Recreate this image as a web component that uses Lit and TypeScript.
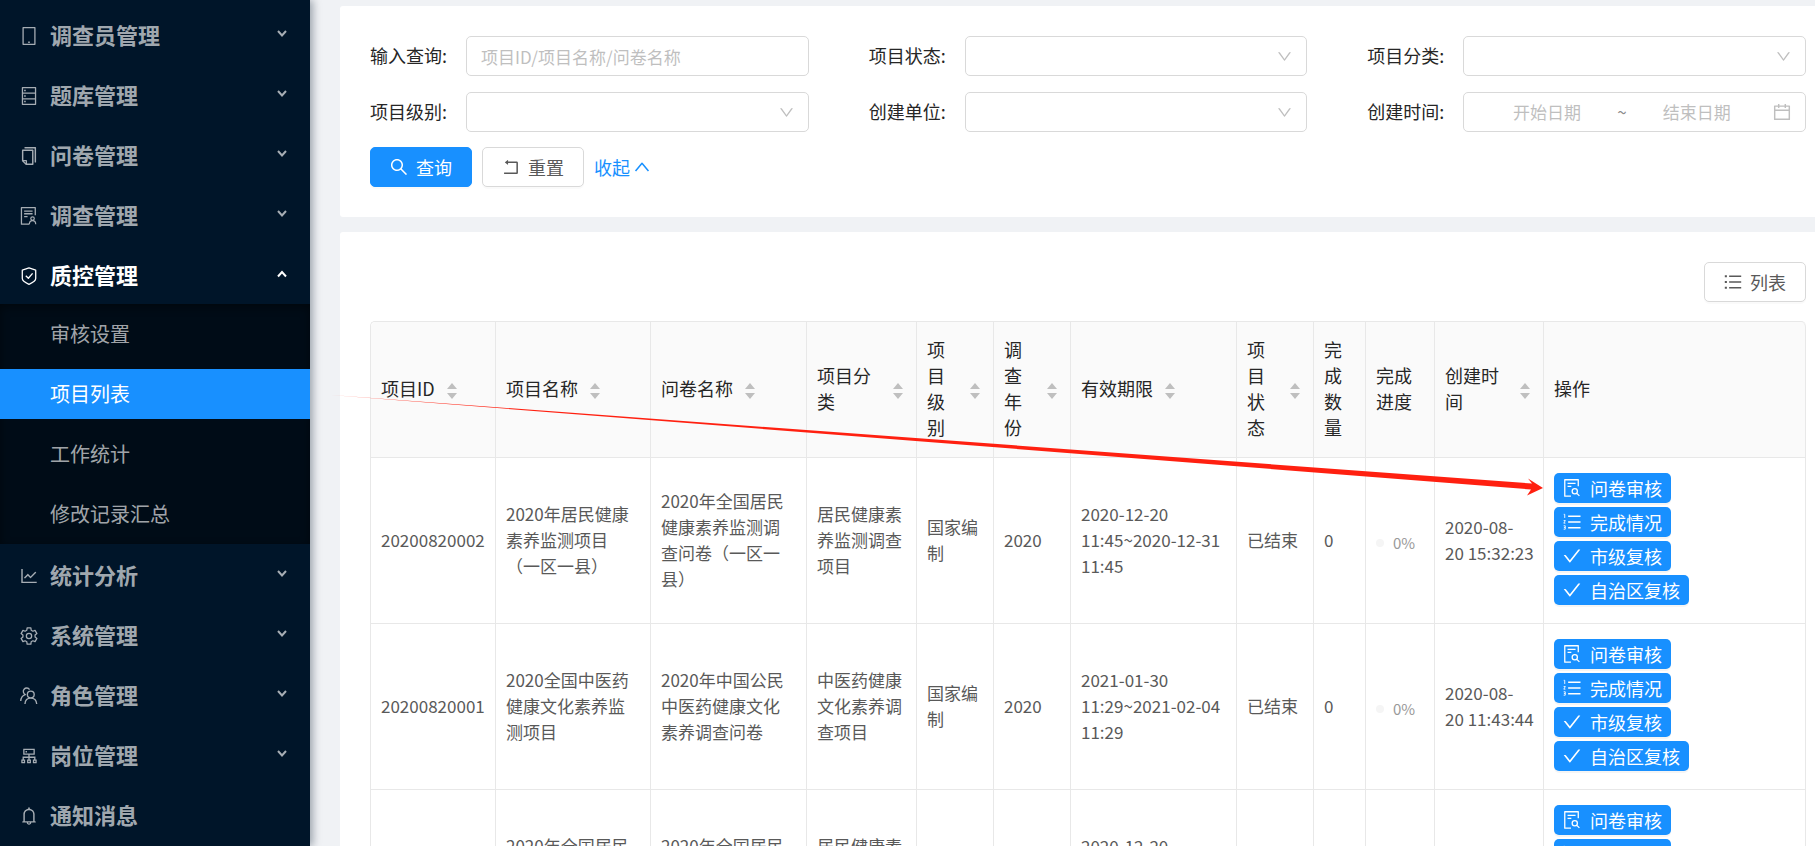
import { LitElement, html, svg, css, nothing, type TemplateResult } from "lit";
import { customElement, state } from "lit/decorators.js";

/* ---------- icons: all drawn on a 1024 grid ---------- */

const gearOutline = (): string => {
  const pts: string[] = [];
  for (let k = 0; k < 6; k++) {
    const base = k * 60 - 90;
    for (const [offset, r] of [[-21, 306], [-13, 412], [13, 412], [21, 306]]) {
      const a = ((base + offset) * Math.PI) / 180;
      pts.push(`${(512 + r * Math.cos(a)).toFixed(1)} ${(512 + r * Math.sin(a)).toFixed(1)}`);
    }
  }
  return `M${pts.join("L")}Z`;
};

const filled = (d: string) => svg`<path fill="currentColor" fill-rule="evenodd" d=${d}></path>`;
const stroked = (d: string, w = 64) =>
  svg`<path fill="none" stroke="currentColor" stroke-width=${w} stroke-linejoin="round" d=${d}></path>`;

const ICONS: Record<string, TemplateResult> = {
  tablet: svg`${stroked("M218 98H806V926H218Z")}${filled("M472 784h80v80h-80z")}`,
  database: svg`${stroked("M186 98H838V926H186ZM186 374H838M186 650H838")}
    ${filled("M270 200h80v72h-80zM270 476h80v72h-80zM270 752h80v72h-80z")}`,
  copy: filled(
    "M832 64H296c-4.4 0-8 3.6-8 8v56c0 4.400 3.600 8 8 8h496v688c0 4.400 3.600 8 8 8h56c4.400 0 8-3.600 8-8V96c0-17.700-14.300-32-32-32zM704 192H192c-17.700 0-32 14.300-32 32v530.700c0 8.500 3.400 16.600 9.400 22.600l173.300 173.300c2.200 2.200 4.700 4 7.400 5.500v1.900h4.200c3.500 1.300 7.200 2 11 2H704c17.700 0 32-14.300 32-32V224c0-17.700-14.300-32-32-32zM350 856.200L263.900 770H350v86.200zM664 888H414V746c0-22.100-17.900-40-40-40H232V264h432v624z"
  ),
  solution: svg`${stroked("M520 920H136V100H824V470M270 270H690M270 400H690M270 540H440")}
    ${stroked("M600 640A88 88 0 1 0 776 640A88 88 0 1 0 600 640ZM530 926C530 800 600 740 688 740S846 800 846 926", 60)}`,
  shield: svg`${stroked("M512 112L846 220V640C846 780 690 850 512 926C334 850 178 780 178 640V220Z")}
    ${stroked("M352 500L480 625L690 380")}`,
  chart: filled(
    "M888 792H200V168c0-4.400-3.600-8-8-8h-56c-4.400 0-8 3.600-8 8v688c0 4.400 3.600 8 8 8h752c4.400 0 8-3.600 8-8v-56c0-4.400-3.600-8-8-8zM305.800 637.700c3.100 3.100 8.100 3.100 11.300 0l138.300-137.600L583 628.500c3.100 3.100 8.200 3.100 11.300 0l275.400-275.300c3.100-3.100 3.100-8.200 0-11.300l-39.600-39.600a8.030 8.030 0 0 0-11.300 0l-230 229.900L461.400 404a8.030 8.030 0 0 0-11.300 0L266.300 586.700a8.030 8.030 0 0 0 0 11.300l39.500 39.700z"
  ),
  setting: svg`${stroked(gearOutline(), 64)}${stroked("M380 512A132 132 0 1 0 644 512A132 132 0 1 0 380 512Z", 64)}`,
  team: svg`${stroked("M430 440A170 170 0 1 0 770 440A170 170 0 1 0 430 440ZM310 910C320 730 440 620 600 620S880 730 896 910", 68)}
    ${stroked("M540 190A170 170 0 1 0 330 440C200 480 110 600 100 760", 68)}`,
  cluster: filled(
    "M888 680h-54V540H546v-92h238c8.800 0 16-7.200 16-16V168c0-8.800-7.200-16-16-16H240c-8.800 0-16 7.200-16 16v264c0 8.800 7.200 16 16 16h238v92H190v140h-54c-4.400 0-8 3.600-8 8v176c0 4.400 3.600 8 8 8h176c4.400 0 8-3.600 8-8V688c0-4.400-3.600-8-8-8h-54v-72h220v72h-54c-4.400 0-8 3.600-8 8v176c0 4.400 3.600 8 8 8h176c4.400 0 8-3.600 8-8V688c0-4.400-3.600-8-8-8h-54v-72h220v72h-54c-4.400 0-8 3.600-8 8v176c0 4.400 3.600 8 8 8h176c4.400 0 8-3.600 8-8V688c0-4.400-3.600-8-8-8zM288 216h448v168H288zM192 744h64v64h-64zM480 744h64v64h-64zM768 744h64v64h-64zM340 264h72v72h-72z"
  ),
  bell: filled(
    "M816 768h-24V428c0-141.100-104.300-257.700-240-277.100V112c0-22.100-17.900-40-40-40s-40 17.900-40 40v38.900c-135.700 19.400-240 136-240 277.100v340h-24c-17.700 0-32 14.300-32 32v32c0 4.400 3.600 8 8 8h216c0 61.800 50.200 112 112 112s112-50.200 112-112h216c4.400 0 8-3.600 8-8v-32c0-17.700-14.300-32-32-32zM512 888c-26.500 0-48-21.500-48-48h96c0 26.500-21.500 48-48 48zM304 768V428c0-55.600 21.600-107.800 60.900-147.100S456.400 220 512 220c55.600 0 107.800 21.600 147.100 60.900S720 372.400 720 428v340H304z"
  ),
  down: filled(
    "M884 256h-75c-5.100 0-9.900 2.500-12.900 6.600L512 654.200 227.900 262.600c-3-4.100-7.800-6.600-12.900-6.600h-75c-6.500 0-10.300 7.400-6.500 12.700l352.600 486.100c12.800 17.600 39 17.600 51.700 0l352.600-486.100c3.900-5.300.1-12.700-6.400-12.700z"
  ),
  up: stroked("M150 740L512 300L874 740", 84),
  search: filled(
    "M909.600 854.500L649.900 594.800C690.200 542.700 712 479 712 412c0-80.200-31.300-155.400-87.900-212.100-56.600-56.700-132-87.900-212.100-87.900s-155.500 31.300-212.100 87.900C143.200 256.500 112 331.800 112 412c0 80.100 31.300 155.500 87.900 212.100C256.500 680.800 331.800 712 412 712c67 0 130.600-21.800 182.700-62l259.700 259.600a8.200 8.200 0 0 0 11.600 0l43.600-43.500a8.200 8.200 0 0 0 0-11.600zM570.400 570.400C528 612.700 471.800 636 412 636s-116-23.300-158.400-65.600C211.300 528 188 471.800 188 412s23.300-116.100 65.600-158.400C296 211.300 352.200 188 412 188s116.100 23.200 158.400 65.600S636 352.200 636 412s-23.300 116.100-65.600 158.400z"
  ),
  rollback: filled(
    "M793 242H366v-74c0-6.700-7.700-10.400-12.900-6.300l-142 112a8 8 0 0 0 0 12.600l142 112c5.200 4.100 12.900.4 12.900-6.300v-74h415v470H175c-4.400 0-8 3.600-8 8v60c0 4.400 3.600 8 8 8h618c35.300 0 64-28.700 64-64V306c0-35.300-28.700-64-64-64z"
  ),
  check: filled(
    "M912 190h-69.900c-9.800 0-19.100 4.500-25.100 12.200L404.700 724.500 207 474a32 32 0 0 0-25.100-12.200H112c-6.700 0-10.400 7.700-6.300 12.900l273.900 347c12.800 16.200 37.400 16.200 50.300 0l488.400-618.900c4.100-5.100.4-12.800-6.300-12.800z"
  ),
  list: svg`${stroked("M320 228H920M320 512H920M320 796H920", 72)}
    ${filled("M104 176h104v104H104zM104 460h104v104H104zM104 744h104v104H104z")}`,
  ordered: svg`${stroked("M320 228H936M320 512H936M320 796H936", 72)}
    ${stroked("M100 130H150V310M96 440H180L104 570H184M96 700H176V870H96M110 785H176", 44)}`,
  audit: svg`${stroked("M460 918H152V102H824V430M290 280H690M290 430H480")}
    ${stroked("M520 670A130 130 0 1 0 780 670A130 130 0 1 0 520 670ZM742 765L880 906", 64)}`,
  calendar: filled(
    "M880 184H712v-64c0-4.400-3.600-8-8-8h-56c-4.400 0-8 3.600-8 8v64H384v-64c0-4.400-3.600-8-8-8h-56c-4.400 0-8 3.600-8 8v64H144c-17.700 0-32 14.300-32 32v664c0 17.700 14.300 32 32 32h736c17.700 0 32-14.300 32-32V216c0-17.700-14.300-32-32-32zm-40 656H184V460h656v380zM184 392V256h128v48c0 4.400 3.600 8 8 8h56c4.400 0 8-3.600 8-8v-48h256v48c0 4.400 3.600 8 8 8h56c4.400 0 8-3.600 8-8v-48h128v136H184z"
  ),
};

const icon = (name: string, cls = "icon") =>
  html`<svg class=${cls} viewBox="64 64 896 896" aria-hidden="true">${ICONS[name]}</svg>`;

/* ---------- data ---------- */

interface MenuGroup {
  icon: string;
  label: string;
  leaf?: boolean;
  children?: string[];
}

const MENU: MenuGroup[] = [
  { icon: "tablet", label: "调查员管理" },
  { icon: "database", label: "题库管理" },
  { icon: "copy", label: "问卷管理" },
  { icon: "solution", label: "调查管理" },
  { icon: "shield", label: "质控管理", children: ["审核设置", "项目列表", "工作统计", "修改记录汇总"] },
  { icon: "chart", label: "统计分析" },
  { icon: "setting", label: "系统管理" },
  { icon: "team", label: "角色管理" },
  { icon: "cluster", label: "岗位管理" },
  { icon: "bell", label: "通知消息", leaf: true },
];

const COLUMNS: { label: string; cls: string; sort?: boolean }[] = [
  { label: "项目ID", cls: "c-id", sort: true },
  { label: "项目名称", cls: "c-name", sort: true },
  { label: "问卷名称", cls: "c-form", sort: true },
  { label: "项目分类", cls: "c-type", sort: true },
  { label: "项目级别", cls: "c-narrow", sort: true },
  { label: "调查年份", cls: "c-narrow", sort: true },
  { label: "有效期限", cls: "c-term", sort: true },
  { label: "项目状态", cls: "c-narrow", sort: true },
  { label: "完成数量", cls: "c-count" },
  { label: "完成进度", cls: "c-progress" },
  { label: "创建时间", cls: "c-created", sort: true },
  { label: "操作", cls: "c-actions" },
];

const ROWS = [
  {
    id: "20200820002",
    name: "2020年居民健康素养监测项目（一区一县）",
    form: "2020年全国居民健康素养监测调查问卷（一区一县）",
    type: "居民健康素养监测调查项目",
    term: "2020-12-20 11:45~2020-12-31 11:45",
    created: ["2020-08-", "20 15:32:23"],
  },
  {
    id: "20200820001",
    name: "2020全国中医药健康文化素养监测项目",
    form: "2020年中国公民中医药健康文化素养调查问卷",
    type: "中医药健康文化素养调查项目",
    term: "2021-01-30 11:29~2021-02-04 11:29",
    created: ["2020-08-", "20 11:43:44"],
  },
  {
    id: "20200820000",
    name: "2020年全国居民健康素养监测项目",
    form: "2020年全国居民健康素养监测调查问卷",
    type: "居民健康素养监测调查项目",
    term: "2020-12-20 11:45~2020-12-31 11:45",
    created: ["2020-08-", "20 10:21:08"],
  },
];

const ACTIONS = [
  { icon: "audit", label: "问卷审核" },
  { icon: "ordered", label: "完成情况" },
  { icon: "check", label: "市级复核" },
  { icon: "check", label: "自治区复核" },
];

const base = css`
  * {
    box-sizing: border-box;
  }
  button,
  input,
  select {
    font: inherit;
    color: inherit;
    margin: 0;
  }
  .icon {
    width: 18px;
    height: 18px;
    flex: none;
    display: block;
  }
`;

/* ---------- sidebar ---------- */

@customElement("side-menu")
export class SideMenu extends LitElement {
  @state() private open = "质控管理";
  @state() private current = "项目列表";

  static styles = [
    base,
    css`
      :host {
        display: block;
        background: #001529;
        color: rgba(255, 255, 255, 0.65);
        box-shadow: 3px 0 8px rgba(0, 21, 41, 0.35);
        padding-top: 4px;
        overflow: hidden;
      }
      .group {
        display: flex;
        align-items: center;
        width: 100%;
        height: 60px;
        padding: 0 23px 0 20px;
        border: 0;
        background: none;
        text-align: left;
        cursor: pointer;
      }
      .group.open {
        color: #fff;
      }
      .group .icon {
        margin-top: 4px;
      }
      .title {
        flex: 1;
        margin-left: 12px;
        font-size: 22px;
        line-height: 32px;
        font-weight: 700;
      }
      .arrow {
        width: 10px;
        height: 8px;
        fill: none;
        stroke: currentColor;
        stroke-width: 2;
      }
      .sub {
        list-style: none;
        margin: 0;
        padding: 5px 0;
        display: grid;
        gap: 10px;
        background: #000c17;
        box-shadow: inset 0 3px 10px rgba(0, 0, 0, 0.45);
      }
      .item {
        display: block;
        padding-left: 50px;
        font-size: 20px;
        line-height: 50px;
        color: inherit;
        text-decoration: none;
      }
      .item.current {
        background: #1890ff;
        color: #fff;
      }
    `,
  ];

  render() {
    return html`<nav aria-label="主菜单">
      ${MENU.map((g) => {
        const open = g.label === this.open && !!g.children;
        return html`<button
            type="button"
            class="group ${open ? "open" : ""}"
            aria-expanded=${g.leaf ? nothing : String(open)}
            @click=${() => (this.open = this.open === g.label ? "" : g.label)}
          >
            ${icon(g.icon)}<span class="title">${g.label}</span>
            ${g.leaf
              ? nothing
              : html`<svg class="arrow" viewBox="0 0 10 8" aria-hidden="true">
                  <path d=${open ? "M1 6.500L5 2L9 6.500" : "M1 1L5 5.500L9 1"}></path>
                </svg>`}
          </button>
          ${open
            ? html`<ul class="sub">
                ${g.children!.map(
                  (c) => html`<li>
                    <a
                      class="item ${c === this.current ? "current" : ""}"
                      href="#"
                      aria-current=${c === this.current ? "page" : nothing}
                      @click=${(e: Event) => {
                        e.preventDefault();
                        this.current = c;
                      }}
                      >${c}</a
                    >
                  </li>`
                )}
              </ul>`
            : nothing}`;
      })}
    </nav>`;
  }
}

/* ---------- search form ---------- */

const formStyles = css`
  .btn {
    display: inline-flex;
    align-items: center;
    gap: 8px;
    height: 40px;
    padding: 0 19px;
    border: 1px solid #d9d9d9;
    border-radius: 5px;
    background: #fff;
    color: #595959;
    font-size: 18px;
    line-height: 26px;
    box-shadow: 0 2px 0 rgba(0, 0, 0, 0.02);
    cursor: pointer;
    white-space: nowrap;
  }
  .btn.primary {
    background: #1890ff;
    border-color: #1890ff;
    color: #fff;
  }
`;

@customElement("search-form")
export class SearchForm extends LitElement {
  static styles = [
    base,
    formStyles,
    css`
      :host {
        display: block;
      }
      .fields {
        display: grid;
        grid-template-columns: repeat(3, minmax(0, 1fr));
        gap: 16px 60px;
      }
      .field {
        display: grid;
        grid-template-columns: 96px minmax(0, 1fr);
        align-items: center;
      }
      .label {
        font-size: 18px;
        line-height: 26px;
        padding-bottom: 2px;
        color: #262626;
      }
      .box {
        width: 100%;
        height: 40px;
        border: 1px solid #d9d9d9;
        border-radius: 5px;
        background: #fff;
        padding: 0 14px;
        font-size: 17px;
        line-height: 26px;
      }
      ::placeholder {
        color: #bfbfbf;
        opacity: 1;
      }
      .select {
        display: grid;
        align-items: center;
      }
      .select > * {
        grid-area: 1 / 1;
      }
      .select .box {
        appearance: none;
      }
      .caret {
        width: 15px;
        height: 15px;
        justify-self: end;
        margin-right: 15px;
        color: #bfbfbf;
        pointer-events: none;
      }
      .range {
        display: flex;
        align-items: center;
      }
      .date {
        flex: 0 1 44%;
        min-width: 0;
        border: 0;
        padding: 0;
        background: none;
        text-align: center;
      }
      .tilde {
        flex: 0 0 12px;
        text-align: center;
        color: #8c8c8c;
      }
      .range .icon {
        margin-left: auto;
        color: #bfbfbf;
      }
      .buttons {
        display: flex;
        align-items: center;
        gap: 10px;
        margin-top: 15px;
      }
      .toggle {
        display: inline-flex;
        align-items: center;
        gap: 4px;
        color: #1890ff;
        font-size: 18px;
        line-height: 26px;
        text-decoration: none;
      }
      .toggle .icon {
        width: 16px;
        height: 16px;
      }
    `,
  ];

  private label(id: string, text: string) {
    return html`<label class="label" for=${id}>${text}:</label>`;
  }

  private select(id: string, text: string) {
    return html`<div class="field">
      ${this.label(id, text)}
      <div class="select">
        <select class="box" id=${id}>
          <option value=""></option>
        </select>
        ${icon("down", "caret")}
      </div>
    </div>`;
  }

  render() {
    return html`<form @submit=${(e: Event) => e.preventDefault()}>
      <div class="fields">
        <div class="field">
          ${this.label("keyword", "输入查询")}
          <input class="box" id="keyword" type="text" placeholder="项目ID/项目名称/问卷名称" />
        </div>
        ${this.select("status", "项目状态")} ${this.select("category", "项目分类")}
        ${this.select("level", "项目级别")} ${this.select("unit", "创建单位")}
        <div class="field">
          ${this.label("start", "创建时间")}
          <div class="box range">
            <input class="date" id="start" type="text" placeholder="开始日期" />
            <span class="tilde">~</span>
            <input class="date" type="text" placeholder="结束日期" aria-label="结束日期" />
            ${icon("calendar")}
          </div>
        </div>
      </div>
      <div class="buttons">
        <button class="btn primary" type="submit">${icon("search")}<span>查询</span></button>
        <button class="btn" type="reset">${icon("rollback")}<span>重置</span></button>
        <a class="toggle" href="#"><span>收起</span>${icon("up")}</a>
      </div>
    </form>`;
  }
}

/* ---------- project table ---------- */

@customElement("project-table")
export class ProjectTable extends LitElement {
  static styles = [
    base,
    css`
      :host {
        display: block;
      }
      table {
        width: 100%;
        table-layout: fixed;
        border-collapse: separate;
        border-spacing: 0;
        border: 1px solid #e8e8e8;
        border-width: 1px 0 0 1px;
        border-radius: 5px 5px 0 0;
        font-size: 17px;
        line-height: 26px;
        color: #595959;
      }
      th,
      td {
        padding: 14px 10px 16px;
        border: 1px solid #e8e8e8;
        border-width: 0 1px 1px 0;
        text-align: left;
        vertical-align: middle;
      }
      th {
        height: 136px;
        padding: 13px 10px 17px;
        background: #fafafa;
        color: #262626;
        font-size: 18px;
        font-weight: 400;
      }
      th:first-child {
        border-top-left-radius: 5px;
      }
      th:last-child {
        border-top-right-radius: 5px;
      }
      td {
        height: 166px;
      }
      .c-id {
        width: 125px;
      }
      .c-name {
        width: 155px;
      }
      .c-form {
        width: 156px;
      }
      .c-type {
        width: 110px;
      }
      .c-narrow {
        width: 77px;
      }
      .c-term {
        width: 166px;
      }
      .c-count {
        width: 52px;
      }
      .c-progress {
        width: 69px;
      }
      .c-created {
        width: 109px;
      }
      .head {
        display: flex;
        align-items: center;
        gap: 12px;
        padding-right: 3px;
      }
      .sorter {
        flex: none;
        width: 10px;
        height: 16px;
        margin-top: 6px;
        fill: #bfbfbf;
      }
      .created {
        display: block;
        white-space: nowrap;
      }
      .progress {
        display: flex;
        align-items: center;
        gap: 9px;
        padding-top: 6px;
        font-size: 15px;
        color: #999;
      }
      .dot {
        width: 8px;
        height: 8px;
        flex: none;
        border-radius: 4px;
        background: #f5f5f5;
      }
      .actions {
        display: grid;
        justify-items: start;
        gap: 4px;
        padding-bottom: 1px;
      }
      .act {
        display: inline-flex;
        align-items: center;
        gap: 9px;
        height: 30px;
        padding: 0 9px;
        border: 0;
        border-radius: 5px;
        background: #1890ff;
        color: #fff;
        font-size: 18px;
        line-height: 26px;
        box-shadow: 0 2px 0 rgba(0, 0, 0, 0.04);
        white-space: nowrap;
        cursor: pointer;
      }
    `,
  ];

  render() {
    return html`<table>
      <thead>
        <tr>
          ${COLUMNS.map(
            (c) => html`<th class=${c.cls} scope="col">
              ${c.sort
                ? html`<div class="head">
                    <span>${c.label}</span>
                    <svg class="sorter" viewBox="0 0 10 16" aria-hidden="true">
                      <path d="M5 0L10 6H0ZM0 10H10L5 16Z"></path>
                    </svg>
                  </div>`
                : c.label}
            </th>`
          )}
        </tr>
      </thead>
      <tbody>
        ${ROWS.map(
          (r) => html`<tr>
            <td>${r.id}</td>
            <td>${r.name}</td>
            <td>${r.form}</td>
            <td>${r.type}</td>
            <td>国家编制</td>
            <td>2020</td>
            <td>${r.term}</td>
            <td>已结束</td>
            <td>0</td>
            <td>
              <div class="progress"><span class="dot"></span><span>0%</span></div>
            </td>
            <td><span class="created">${r.created[0]}<br />${r.created[1]}</span></td>
            <td>
              <div class="actions">
                ${ACTIONS.map(
                  (a) => html`<button type="button" class="act">${icon(a.icon)}<span>${a.label}</span></button>`
                )}
              </div>
            </td>
          </tr>`
        )}
      </tbody>
    </table>`;
  }
}

/* ---------- page ---------- */

@customElement("app-root")
export class AppRoot extends LitElement {
  static styles = [
    base,
    formStyles,
    css`
      :host {
        display: grid;
        grid-template-columns: 310px minmax(0, 1fr);
        height: 100vh;
        overflow: hidden;
        background: #f0f2f5;
        font-family: "Noto Sans CJK SC", "Noto Sans", sans-serif;
      }
      side-menu {
        z-index: 1;
      }
      .main {
        position: relative;
        display: flex;
        flex-direction: column;
        gap: 15px;
        min-height: 0;
        padding: 6px 0 0 30px;
        overflow: hidden;
      }
      .panel {
        flex: none;
        padding: 30px 9px 30px 30px;
        background: #fff;
        border-radius: 3px 0 0 3px;
      }
      .toolbar {
        display: flex;
        justify-content: flex-end;
        margin-bottom: 19px;
      }
      /* annotation drawn over the page */
      .pointer {
        position: absolute;
        left: 21px;
        top: 390px;
        width: 1214px;
        height: 110px;
        fill: #ff2010;
        pointer-events: none;
      }
    `,
  ];

  render() {
    return html`
      <side-menu></side-menu>
      <main class="main">
        <section class="panel"><search-form></search-form></section>
        <section class="panel">
          <div class="toolbar">
            <button type="button" class="btn">${icon("list")}<span>列表</span></button>
          </div>
          <project-table></project-table>
        </section>
        <svg class="pointer" viewBox="0 0 1214 110" aria-hidden="true">
          <path d="M0 5L1201 93.500L1197 88.500L1212 98L1196 105.500L1200 99.500Z"></path>
        </svg>
      </main>
    `;
  }
}
